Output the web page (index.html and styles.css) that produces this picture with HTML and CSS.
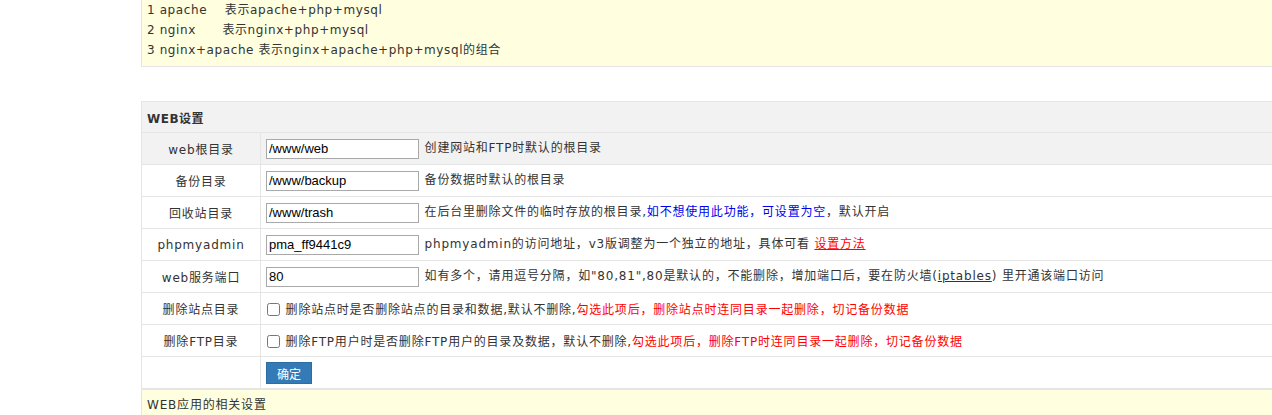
FILE: index.html
```html
<!DOCTYPE html>
<html>
	<head>
		<meta charset="utf-8">
		<link rel="stylesheet" href="styles.css">
	</head>
	<body>
		<div class="main">
			<div class="tips">
				<div>1 apache&nbsp;&nbsp;&nbsp; 表示apache+php+mysql</div>
				<div>2 nginx&nbsp;&nbsp;&nbsp;&nbsp;&nbsp; 表示nginx+php+mysql</div>
				<div>3 nginx+apache 表示nginx+apache+php+mysql的组合</div>
			</div>
			<table class="form">
				<tr class="head">
					<td colspan="2">WEB设置</td>
				</tr>
				<tr class="hover">
					<td class="label">web根目录</td>
					<td><input class="text" type="text" value="/www/web"> 创建网站和FTP时默认的根目录</td>
				</tr>
				<tr>
					<td class="label">备份目录</td>
					<td><input class="text" type="text" value="/www/backup"> 备份数据时默认的根目录</td>
				</tr>
				<tr>
					<td class="label">回收站目录</td>
					<td><input class="text" type="text" value="/www/trash"> 在后台里删除文件的临时存放的根目录,<span class="blue">如不想使用此功能，可设置为空</span>，默认开启</td>
				</tr>
				<tr>
					<td class="label">phpmyadmin</td>
					<td><input class="text" type="text" value="pma_ff9441c9"> phpmyadmin的访问地址，v3版调整为一个独立的地址，具体可看 <a class="red" href="#">设置方法</a></td>
				</tr>
				<tr>
					<td class="label">web服务端口</td>
					<td><input class="text" type="text" value="80"> 如有多个，请用逗号分隔，如"80,81",80是默认的，不能删除，增加端口后，要在防火墙(<a class="dark" href="#">iptables</a>) 里开通该端口访问</td>
				</tr>
				<tr>
					<td class="label">删除站点目录</td>
					<td><input class="check" type="checkbox"> 删除站点时是否删除站点的目录和数据,默认不删除,<span class="red">勾选此项后，删除站点时连同目录一起删除，切记备份数据</span></td>
				</tr>
				<tr>
					<td class="label">删除FTP目录</td>
					<td><input class="check" type="checkbox"> 删除FTP用户时是否删除FTP用户的目录及数据，默认不删除,<span class="red">勾选此项后，删除FTP时连同目录一起删除，切记备份数据</span></td>
				</tr>
				<tr>
					<td class="label"></td>
					<td><button class="btn">确定</button></td>
				</tr>
				<tr class="foot">
					<td colspan="2">WEB应用的相关设置</td>
				</tr>
			</table>
		</div>
	</body>
</html>
```

FILE: styles.css
```css
body {
	margin: 0;
	font-family: "DejaVu Sans", "Noto Sans CJK SC", sans-serif;
	font-size: 12px;
	letter-spacing: 0.8px;
	color: #333;
	background: #fff;
}
.main {
	margin-left: 141px;
}
.tips {
	background: #ffffe0;
	border-left: 1px solid #e5e5e5;
	border-bottom: 1px solid #e5e5e5;
	padding: 0 0 5px 5px;
	line-height: 20px;
	height: 61px;
	box-sizing: content-box;
	margin-bottom: 34px;
	letter-spacing: 0.6px;
}
.form {
	width: 100%;
	border-collapse: collapse;
}
.form td {
	border: 1px solid #e5e5e5;
	border-right: none;
	height: 32px;
	padding: 0 5px;
	box-sizing: border-box;
}
.head td {
	background: #f2f2f2;
	font-weight: bold;
	height: 31px;
	letter-spacing: 0.5px;
}
.hover td {
	background: #f2f2f2;
}
.form .label {
	width: 119px;
	text-align: center;
	color: #333;
}
.text {
	width: 153px;
	height: 20px;
	box-sizing: border-box;
	border: 1px solid #a9a9a9;
	padding: 0 2px;
	margin: 0 1px 0 0;
	font-family: "Liberation Sans", sans-serif;
	font-size: 13px;
	letter-spacing: 0;
	color: #000;
	vertical-align: middle;
}
.check {
	width: 13px;
	height: 13px;
	margin: 0 1px 0 1px;
	vertical-align: -2px;
}
.blue {
	color: #0000ee;
}
.red {
	color: #ff0000;
}
a.red {
	text-decoration: underline;
}
a.dark {
	color: #333;
	text-decoration: underline;
}
.btn {
	width: 46px;
	height: 22px;
	background: #337ab7;
	border: 1px solid #2e6da4;
	color: #fff;
	font-family: inherit;
	font-size: 12px;
	letter-spacing: 0;
	padding: 0;
	vertical-align: middle;
	margin-top: 2px;
}
.foot td {
	background: #ffffe0;
	border-top: 2px solid #e5e5e5;
	height: 30px;
}
```
